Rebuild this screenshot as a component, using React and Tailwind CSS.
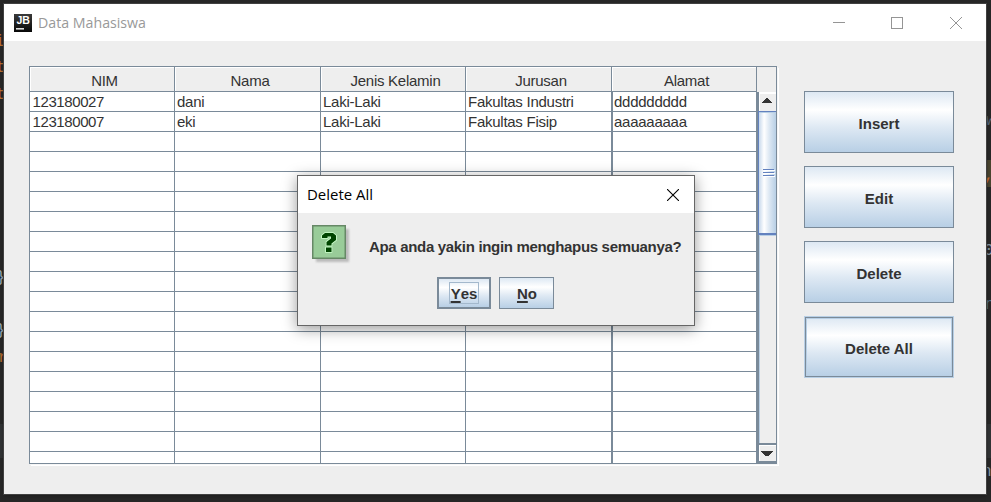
import React from "react";

const HEADERS = ["NIM", "Nama", "Jenis Kelamin", "Jurusan", "Alamat"];
const DATA = [
  ["123180027", "dani", "Laki-Laki", "Fakultas Industri", "ddddddddd"],
  ["123180007", "eki", "Laki-Laki", "Fakultas Fisip", "aaaaaaaaa"],
];
const ROWS = Array.from({ length: 19 }, (_, i) => DATA[i] || ["", "", "", "", ""]);

const HEAD_COLS = "grid grid-cols-[145px_146px_145px_146px_145px]";
const METAL = "bg-[linear-gradient(to_bottom,#dde8f3_0%,#ffffff_30%,#dde8f3_60%,#b8cfe5_100%)]";

function Fragment({ className, children }) {
  return <span className={"absolute whitespace-pre font-['Liberation_Mono',monospace] text-[16px] leading-[18px] " + className}>{children}</span>;
}

function Editor() {
  return (
    <div className="absolute inset-0 bg-[#272727]">
      <div className="absolute top-[424px] left-0 h-[34px] w-full bg-[#313335]" />
      <div className="absolute top-[160px] right-0 h-[27px] w-[5px] bg-[#4b4530]" />
      <Fragment className="top-[33px] -left-[5px] text-[#c07030]">i</Fragment>
      <Fragment className="top-[59px] -left-[4px] text-[#c07030]">t</Fragment>
      <Fragment className="top-[86px] -left-[4px] text-[#c07030]">t</Fragment>
      <Fragment className="top-[269px] -left-[4px] text-[#a0b0bc]">{"}"}</Fragment>
      <Fragment className="top-[322px] -left-[4px] text-[#a0b0bc]">{"}"}</Fragment>
      <Fragment className="top-[349px] -left-[2px] text-[#c07030]">r</Fragment>
      <Fragment className="top-[466px] left-px text-[#53728c]">;</Fragment>
      <Fragment className="top-[112px] left-[986px] text-[#56687c]">w</Fragment>
      <Fragment className="top-[167px] left-[984px] text-[#d8702c]">,</Fragment>
      <Fragment className="top-[242px] left-[984px] text-[#8a9aa8]">0</Fragment>
      <Fragment className="top-[296px] left-[985px] text-[#53728c]">n</Fragment>
      <Fragment className="top-[463px] left-[982px] text-[#8a9aa8]">n</Fragment>
    </div>
  );
}

function TitleBar() {
  return (
    <div className="flex h-[37px] shrink-0 items-center bg-white pl-[10px]">
      <svg width="18" height="18" viewBox="0 0 18 18" className="shrink-0">
        <defs>
          <linearGradient id="jb" x1="0" y1="0" x2="0" y2="1">
            <stop offset="0" stopColor="#3a3a3a" />
            <stop offset="1" stopColor="#080808" />
          </linearGradient>
        </defs>
        <rect width="18" height="18" fill="url(#jb)" />
        <text x="2.5" y="10" fontFamily="Liberation Sans, sans-serif" fontWeight="700" fontSize="10.5" fill="#fff" textLength="13.5" lengthAdjust="spacingAndGlyphs">JB</text>
        <rect x="2" y="14" width="8" height="1.6" fill="#ddd" />
      </svg>
      <svg width="112" height="20" className="ml-[6px] block">
        <text x="0" y="15" fontSize="15" fill="#999" fontFamily="Open Sans, sans-serif" textLength="108" lengthAdjust="spacingAndGlyphs">Data Mahasiswa</text>
      </svg>
      <svg width="130" height="12" viewBox="0 0 130 12" className="mr-[24px] ml-auto" fill="none" stroke="#959595" shapeRendering="crispEdges">
        <path d="M1 5.5h12" />
        <rect x="59.5" y=".5" width="11" height="11" />
        <path d="M118 0l12 12M130 0l-12 12" shapeRendering="auto" />
      </svg>
    </div>
  );
}

function Scrollbar() {
  return (
    <div className="flex h-full w-[17px] flex-col bg-[#eee]">
      <div className="flex h-[19px] items-end justify-center border-t-2 border-l border-white pr-[3px] pb-[8px]">
        <svg width="10" height="5" shapeRendering="crispEdges"><path d="M4 0h2v1h1v1h1v1h1v1h1v1H0V4h1V3h1V2h1V1h1z" fill="#333" /></svg>
      </div>
      <div className="-ml-px flex h-[124px] flex-col items-center justify-center gap-[2px] border-t border-b-2 border-l border-[#6382bf] bg-[linear-gradient(to_right,#c8d9ec_0%,#ffffff_30%,#dde8f3_60%,#b8cfe5_100%)] pl-px shadow-[inset_0_1px_0_#b8cfe5]">
        <div className="h-px w-[11px] bg-[#6382bf] shadow-[1px_1px_0_white]" />
        <div className="h-px w-[11px] bg-[#6382bf] shadow-[1px_1px_0_white]" />
        <div className="h-px w-[11px] bg-[#6382bf] shadow-[1px_1px_0_white]" />
      </div>
      <div className="flex-1 border-t border-l border-[#b8cfe5]" />
      <div className="flex h-[20px] justify-center border-t-2 border-b-2 border-[#7a8a99] pt-[6px] pr-px shadow-[inset_1px_1px_0_white]">
        <svg width="12" height="5" shapeRendering="crispEdges"><path d="M0 0h12v1h-1v1h-1v1H9v1H8v1H4V4H3V3H2V2H1V1H0z" fill="#333" /></svg>
      </div>
    </div>
  );
}

function Table() {
  return (
    <div className="flex h-[398px] w-[748px] flex-col border border-[#7a8a99] text-[15px] tracking-[-0.26px] text-[#333] shadow-[1px_1px_0_#f6f6f6,2px_2px_0_white]">
      <div className="flex h-[25px] shrink-0">
        <div className={HEAD_COLS}>
          {HEADERS.map((h) => (
            <div key={h} className="flex h-[25px] items-center justify-center border-r border-b border-[#7a8a99] pt-[4px] pl-[5px] shadow-[inset_1px_1px_0_white]">
              <span>{h}</span>
            </div>
          ))}
        </div>
      </div>
      <div className="flex min-h-0 flex-1">
        <div className="w-[727px] overflow-hidden bg-white">
          {ROWS.map((row, i) => (
            <div key={i} className={HEAD_COLS}>
              {row.map((c, j) => (
                <div key={j} className={"h-[20px] border-r border-b border-[#7a8a99] leading-[20px] whitespace-nowrap " + (j === 4 ? "border-l pl-px" : j === 0 ? "pl-[2.5px] tracking-[-0.4px]" : "pl-[2px]")}>{c}</div>
              ))}
            </div>
          ))}
        </div>
        <div className="w-[2px] bg-[#7a8a99]" />
        <Scrollbar />
      </div>
    </div>
  );
}

function SideButton({ label, focused }) {
  return (
    <button className={"flex h-[62px] w-[150px] border " + (focused ? "border-[#b8cfe5]" : "border-[#7a8a99]")}>
      <span className={"flex h-full w-full items-center justify-center pt-[4px] text-[15px] font-bold text-[#333] " + METAL + (focused ? " border border-[#7a8a99] shadow-[inset_0_0_0_1px_#b8cfe5]" : "")}>
        {label}
      </span>
    </button>
  );
}

function QuestionIcon() {
  return (
    <svg width="40" height="40" viewBox="0 0 40 40">
      <defs><filter id="soft"><feGaussianBlur stdDeviation="1" /></filter></defs>
      <rect x="4" y="4" width="33" height="33" fill="#bbb" filter="url(#soft)" />
      <rect x="0.75" y="0.75" width="32.5" height="32.5" fill="#99cc99" stroke="#668866" strokeWidth="1.5" />
      <path d="M10 13V10.500l3-2.500h8l3 2.500v4.500l-4.500 3.500v2h-5v-3.500l4.500-3.500v-2h-3.500V13zM14 22.500h5.500V27H14z" fill="#004400" stroke="#ccffcc" strokeWidth="1.600" paintOrder="stroke" />
    </svg>
  );
}

function Dialog() {
  return (
    <div className="absolute top-[175px] left-[297px] flex h-[151px] w-[398px] flex-col border border-[#666] bg-[#eee] shadow-[0_3px_14px_rgba(0,0,0,0.4)]">
      <div className="flex h-[37px] items-center justify-between bg-white pr-[15px] pl-[9px]">
        <svg width="70" height="20">
          <text x="0" y="15" fontSize="15" fill="#000" fontFamily="Open Sans, sans-serif" textLength="66" lengthAdjust="spacingAndGlyphs">Delete All</text>
        </svg>
        <svg width="12" height="12" stroke="#000" strokeWidth="1.1"><path d="M0 0l12 12M12 0L0 12" /></svg>
      </div>
      <div className="flex pt-[12px] pl-[14px]">
        <QuestionIcon />
        <p className="ml-[17px] pt-[11px] text-[15px] leading-[22px] font-bold tracking-[-0.32px] whitespace-nowrap text-[#333]">Apa anda yakin ingin menghapus semuanya?</p>
      </div>
      <div className="flex gap-[8px] pt-[12px] pl-[139px] text-[15px] font-bold text-[#333]">
        <button className={"flex h-[32px] w-[54px] items-center justify-center border-2 border-[#7a8a99] " + METAL}>
          <span className="flex h-[22px] w-[30px] items-center justify-center border border-[#a3b8cc] pt-[2px]"><u className="underline decoration-2 underline-offset-2">Y</u>es</span>
        </button>
        <button className={"flex h-[32px] w-[55px] items-center justify-center border border-[#7a8a99] pt-[2px] pl-px " + METAL}>
          <span><u className="underline decoration-2 underline-offset-2">N</u>o</span>
        </button>
      </div>
    </div>
  );
}

export default function App() {
  return (
    <div className="relative h-[502px] w-[991px] overflow-hidden pt-[4px] pl-[4px] font-['Liberation_Sans',Arial,sans-serif]">
      <Editor />
      <main className="relative flex h-[490px] w-[982px] flex-col bg-[#eee] shadow-[0_0_0_1px_#404040,0_2px_4px_#1c1c1c]">
        <TitleBar />
        <div className="flex pt-[25px] pl-[25px]">
          <Table />
          <div className="flex flex-col gap-[13px] pt-[25px] pl-[27px]">
            <SideButton label="Insert" />
            <SideButton label="Edit" />
            <SideButton label="Delete" />
            <SideButton label="Delete All" focused />
          </div>
        </div>
      </main>
      <Dialog />
    </div>
  );
}
